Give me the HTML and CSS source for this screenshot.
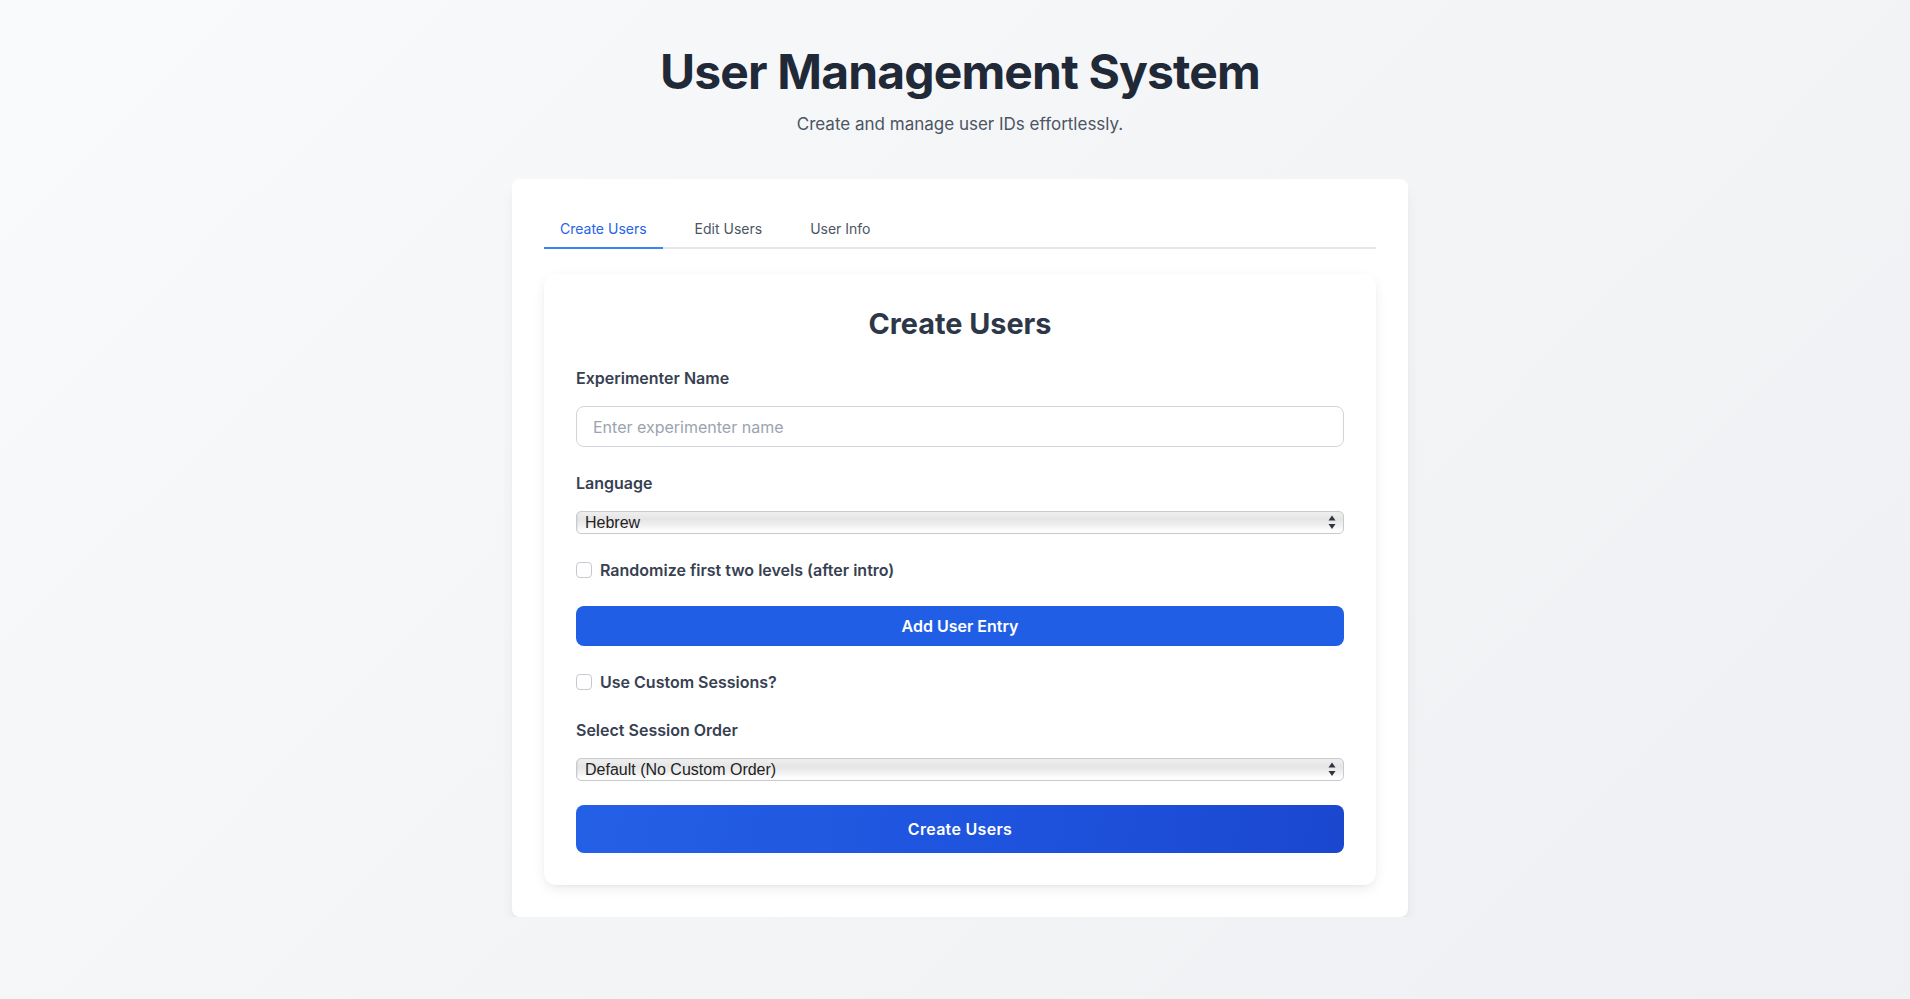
FILE: index.html
```html
<!DOCTYPE html>
<html lang="en">
<head>
<meta charset="utf-8">
<title>User Management System</title>
<link rel="stylesheet" href="styles.css">
</head>
<body>
<div class="page">
  <header class="header">
    <h1 class="title">User Management System</h1>
    <p class="subtitle">Create and manage user IDs effortlessly.</p>
  </header>
  <main class="card">
    <nav class="tabs">
      <button class="tab tab-active">Create Users</button>
      <button class="tab">Edit Users</button>
      <button class="tab">User Info</button>
    </nav>
    <section class="panel">
      <h2 class="panel-title">Create Users</h2>
      <div class="group">
        <label class="label" for="exp">Experimenter Name</label>
        <input id="exp" class="input" type="text" placeholder="Enter experimenter name">
      </div>
      <div class="group">
        <label class="label" for="lang">Language</label>
        <div class="select">
          <span class="select-text">Hebrew</span>
          <svg class="select-arrows" width="8" height="15" viewBox="0 0 8 15"><path d="M4 0.5 L7.5 5.5 L0.5 5.5 Z M4 14 L7.5 9 L0.5 9 Z" fill="#2f3440"/></svg>
        </div>
      </div>
      <div class="group check-row">
        <span class="checkbox"></span>
        <span class="check-label">Randomize first two levels (after intro)</span>
      </div>
      <div class="group">
        <button class="btn btn-solid">Add User Entry</button>
      </div>
      <div class="group check-row">
        <span class="checkbox"></span>
        <span class="check-label">Use Custom Sessions?</span>
      </div>
      <div class="group">
        <label class="label">Select Session Order</label>
        <div class="select">
          <span class="select-text">Default (No Custom Order)</span>
          <svg class="select-arrows" width="8" height="15" viewBox="0 0 8 15"><path d="M4 0.5 L7.5 5.5 L0.5 5.5 Z M4 14 L7.5 9 L0.5 9 Z" fill="#2f3440"/></svg>
        </div>
      </div>
      <button class="btn btn-gradient">Create Users</button>
    </section>
  </main>
</div>
</body>
</html>
```
FILE: styles.css
```css
* { box-sizing: border-box; }
html {
  height: 100%;
  background: linear-gradient(135deg, #f9fafb 0%, #f3f4f6 55%, #eff0f3 100%);
}
body {
  margin: 0;
  padding: 0;
  font-family: Inter, "Noto Sans", sans-serif;
  color: #1f2937;
}
.page {
  padding-top: 48px;
  padding-left: 10px;
  display: flex;
  flex-direction: column;
  align-items: center;
}
.header { text-align: center; }
.title {
  margin: 0 0 14px;
  font-size: 48px;
  line-height: 48px;
  font-weight: 700;
  color: #1f2937;
  letter-spacing: -0.85px;
}
.subtitle {
  margin: 0;
  font-size: 17px;
  line-height: 28px;
  color: #4b5563;
}
.card {
  margin-top: 41px;
  width: 896px;
  background: #fff;
  border-radius: 8px;
  padding: 32px;
  box-shadow: 0 10px 15px -3px rgba(0,0,0,0.08), 0 4px 6px -4px rgba(0,0,0,0.06);
}
.tabs {
  display: flex;
  gap: 16px;
  border-bottom: 2px solid #e5e7eb;
}
.tab {
  font-family: Inter, sans-serif;
  font-size: 14px;
  line-height: 20px;
  padding: 8px 16px;
  background: none;
  border: none;
  border-bottom: 2px solid transparent;
  margin-bottom: -2px;
  color: #4b5563;
  cursor: pointer;
}
.tab-active {
  color: #2563eb;
  border-bottom-color: #3b82f6;
}
.panel {
  margin-top: 25px;
  padding: 32px;
  border-radius: 12px;
  background: #fff;
  box-shadow: 0 4px 14px -2px rgba(0,0,0,0.10), 0 2px 4px -2px rgba(0,0,0,0.05);
  display: flex;
  flex-direction: column;
}
.panel-title {
  margin: 0 0 24px;
  text-align: center;
  font-size: 28.8px;
  line-height: 36px;
  font-weight: 700;
  color: #2d3748;
}
.group { margin-bottom: 24px; }
.label {
  display: block;
  margin-bottom: 16px;
  font-size: 16px;
  line-height: 24px;
  font-weight: 600;
  color: #374151;
}
.input {
  display: block;
  width: 100%;
  height: 41px;
  padding: 0 16px;
  border: 1px solid #d1d5db;
  border-radius: 8px;
  font-family: Inter, sans-serif;
  font-size: 16px;
  color: #111827;
  background: #fff;
}
.input::placeholder { color: #9ca3af; }
.select {
  position: relative;
  height: 23px;
  border: 1px solid #c9cacc;
  border-radius: 5px;
  background: linear-gradient(to bottom, #efefef 0%, #e5e5e5 35%, #eeeeee 60%, #fbfbfb 85%, #ffffff 100%);
  box-shadow: inset 1px 0 1px rgba(0,0,0,0.06);
  display: flex;
  align-items: center;
  padding-left: 8px;
}
.select-text {
  font-family: "Liberation Sans", Arial, sans-serif;
  font-size: 16px;
  color: #222;
}
.select-arrows {
  position: absolute;
  right: 7px;
  top: 3px;
}
.check-row {
  display: flex;
  align-items: center;
  gap: 8px;
  height: 24px;
}
.checkbox {
  width: 16px;
  height: 16px;
  border: 1px solid #c6c9ce;
  border-radius: 4px;
  background: #fff;
  flex: none;
}
.check-label {
  font-size: 16px;
  line-height: 24px;
  font-weight: 600;
  color: #374151;
}
.btn {
  display: block;
  width: 100%;
  border: none;
  border-radius: 8px;
  color: #fff;
  font-family: Inter, sans-serif;
  font-size: 16px;
  font-weight: 600;
  cursor: pointer;
}
.btn-solid {
  height: 40px;
  background: #215ee6;
}
.btn-gradient {
  height: 48px;
  background: linear-gradient(100deg, #2460e6 0%, #1e52dc 60%, #1b47cf 100%);
  letter-spacing: 0.3px;
}
```
